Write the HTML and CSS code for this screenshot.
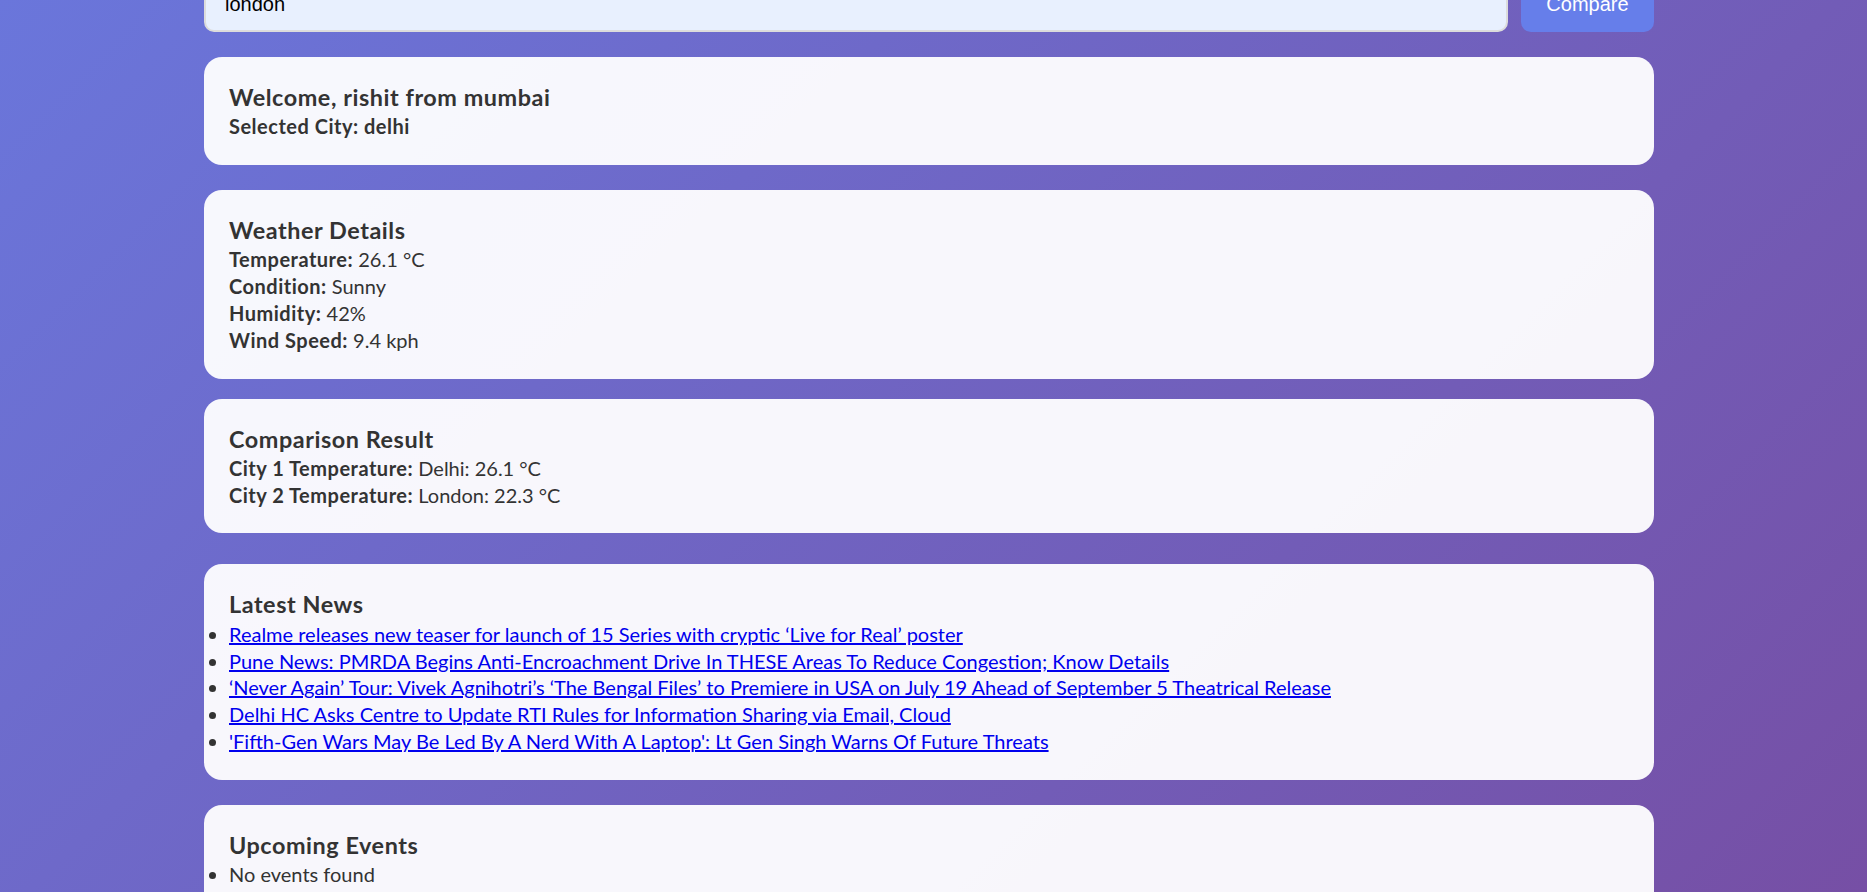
FILE: index.html
```html
<!DOCTYPE html>
<html lang="en">
<head>
<meta charset="utf-8">
<title>City Dashboard</title>
<link rel="stylesheet" href="styles.css">
</head>
<body>
<div class="page">
  <form class="search-row">
    <input class="city-input" type="text" value="london">
    <button class="btn" type="button">Compare</button>
  </form>

  <section class="card card--welcome">
    <h3 class="card-title">Welcome, rishit from mumbai</h3>
    <p class="line line--strong">Selected City: delhi</p>
  </section>

  <section class="card card--weather">
    <h3 class="card-title">Weather Details</h3>
    <p class="line"><b class="label">Temperature:</b> 26.1 °C</p>
    <p class="line"><b class="label">Condition:</b> Sunny</p>
    <p class="line"><b class="label">Humidity:</b> 42%</p>
    <p class="line"><b class="label">Wind Speed:</b> 9.4 kph</p>
  </section>

  <section class="card card--compare">
    <h3 class="card-title">Comparison Result</h3>
    <p class="line"><b class="label">City 1 Temperature:</b> Delhi: 26.1 °C</p>
    <p class="line"><b class="label">City 2 Temperature:</b> London: 22.3 °C</p>
  </section>

  <section class="card card--news">
    <h3 class="card-title">Latest News</h3>
    <ul class="list">
      <li><a href="#">Realme releases new teaser for launch of 15 Series with cryptic ‘Live for Real’ poster</a></li>
      <li><a href="#">Pune News: PMRDA Begins Anti-Encroachment Drive In THESE Areas To Reduce Congestion; Know Details</a></li>
      <li><a href="#">‘Never Again’ Tour: Vivek Agnihotri’s ‘The Bengal Files’ to Premiere in USA on July 19 Ahead of September 5 Theatrical Release</a></li>
      <li><a href="#">Delhi HC Asks Centre to Update RTI Rules for Information Sharing via Email, Cloud</a></li>
      <li><a href="#">'Fifth-Gen Wars May Be Led By A Nerd With A Laptop': Lt Gen Singh Warns Of Future Threats</a></li>
    </ul>
  </section>

  <section class="card card--events">
    <h3 class="card-title">Upcoming Events</h3>
    <ul class="list">
      <li>No events found</li>
    </ul>
  </section>
</div>
</body>
</html>
```
FILE: styles.css
```css
html {
  background: linear-gradient(135deg, rgb(106, 118, 219) 0%, rgb(118, 79, 165) 100%) fixed;
}

body {
  margin: 0;
  font-family: "Lato", "Noto Sans", sans-serif;
  font-size: 20px;
  line-height: 26.8px;
  color: #333;
}

.page {
  padding: 0 213px 60px 204px;
}

.search-row {
  display: flex;
  gap: 13px;
  margin: -24px 0 0;
}

.city-input {
  flex: 1;
  min-width: 0;
  box-sizing: border-box;
  height: 56px;
  padding: 0 19px;
  border: 2px solid #dcdcdc;
  border-radius: 10px;
  background: #e8f0fe;
  font-family: "Liberation Sans", Arial, sans-serif;
  font-size: 20px;
  color: #000;
  outline: none;
}

.btn {
  width: 133px;
  box-sizing: border-box;
  height: 56px;
  padding: 0 25px;
  border: 0;
  border-radius: 10px;
  background: #667eea;
  color: #fff;
  font-family: "Liberation Sans", Arial, sans-serif;
  font-size: 20px;
}

.card {
  background: rgba(255, 255, 255, 0.95);
  border-radius: 18px;
  padding: 25px;
}

.card--welcome { margin-top: 25px; }
.card--weather { margin-top: 25px; }
.card--compare { margin-top: 20px; }
.card--news { margin-top: 31px; }
.card--events { margin-top: 25px; }

.card-title {
  margin: 0;
  font-size: 23.4px;
  line-height: 31.3px;
  font-weight: 700;
  letter-spacing: 0.55px;
}

.line {
  margin: 0;
}

.line--strong {
  font-weight: 700;
  letter-spacing: 0.5px;
}

.label {
  font-weight: 700;
  letter-spacing: 0.5px;
}

.list {
  margin: 0;
  padding: 0;
  list-style: disc outside;
}

.list a {
  color: #0000ee;
  text-decoration: underline;
}
```
